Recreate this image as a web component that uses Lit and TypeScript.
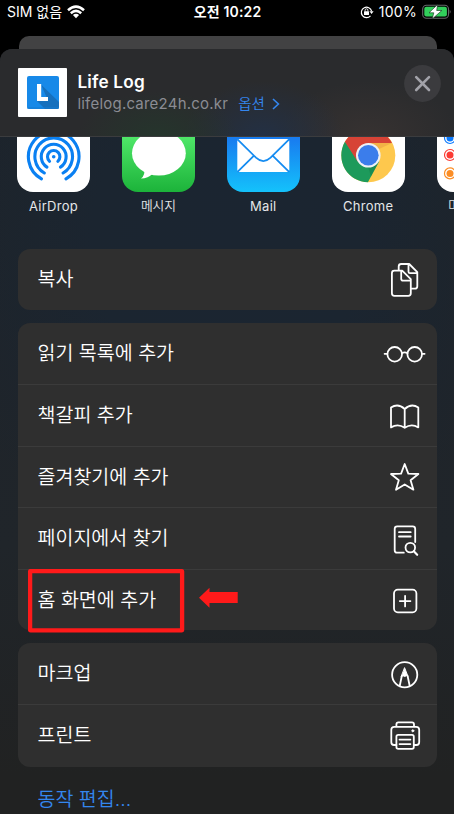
import { LitElement, html, svg, css } from "lit";
import { customElement, property } from "lit/decorators.js";

const arc = (r: number, deg: number) => {
  const a = (deg * Math.PI) / 180;
  const x = r * Math.sin(a);
  const y = r * Math.cos(a);
  return `M${-x} ${y}A${r} ${r} 0 1 1 ${x} ${y}`;
};

const actionIcons: Record<string, unknown> = {
  copy: svg`<path d="M15.7 10V6.5Q15.7 4 18.2 4H26.2L34.3 12.2V26.2Q34.3 28.7 31.8 28.7H28.5M25.5 4.5V11.7Q25.5 13.2 27 13.2H34"/>
    <path d="M11.3 10.7H19.2L27.8 19.2V33.3Q27.8 35.8 25.3 35.8H11.4Q8.9 35.8 8.9 33.3V13.2Q8.9 10.7 11.3 10.7ZM18.2 11V18.8Q18.2 20.7 20 20.7H27.6"/>`,
  glasses: svg`<circle cx="11.7" cy="20.3" r="7.3"/><circle cx="31.7" cy="20.3" r="7.3"/><path d="M1.6 19.8H4.3M39 19.8H41.6M18.9 19.1Q21.7 17.7 24.5 19.1"/>`,
  book: svg`<path d="M21.7 13Q15 6.8 8 11.6V31.4Q15 27.3 21.7 31.8Q28.5 27.3 35.3 31.4V11.6Q28.5 6.8 21.7 13V31.8"/>`,
  star: svg`<path d="M21.7 7L25.3 16.6L35.4 17L27.6 23.3L30.4 32.7L21.7 27.4L13 32.7L15.8 23.3L8 17L18.1 16.6Z"/>`,
  find: svg`<path d="M20.8 33.7H14.2Q11.7 33.7 11.7 31.2V9.8Q11.7 7.3 14.2 7.3H29.7Q32.2 7.3 32.2 9.8V23M16 13.2H27.7M16 17.5H27.7"/><circle cx="27.3" cy="28.6" r="4.8"/><path d="M30.8 32.2L34.2 35.8" stroke-width="2.1"/>`,
  plus: svg`<rect x="11" y="9.7" width="22.4" height="22.6" rx="3.8"/><path d="M22.1 15.8V26.4M16.8 21.1H27.4"/>`,
  markup: svg`<circle cx="21.7" cy="20.7" r="12.6"/><path d="M16.8 31.5L18.8 22M26.6 31.5L24.6 22"/><path d="M21.7 14L25 22.5L23.4 21.7L21.7 22.5L20 21.7L18.4 22.5Z" fill="#fff" stroke-width="1"/>`,
  print: svg`<path d="M13.4 11.5V9.4Q13.4 7.4 15.4 7.4H29Q31 7.4 31 9.4V11.5M13.4 30H11Q8.3 30 8.3 27.3V14.8Q8.3 11.8 11.3 11.8H33.2Q36.2 11.8 36.2 14.8V27.3Q36.2 30 33.5 30H30.8"/><rect x="13.4" y="19.9" width="17.4" height="14" rx="1.8"/><path d="M16.5 24.6H27.4M16.5 29.1H27.4"/><circle cx="29.8" cy="15.8" r="1" fill="#fff" stroke-width="1"/>`,
};

const appIcons: Record<string, unknown> = {
  airdrop: svg`<rect width="73" height="73" rx="16" fill="#fff"/>
    <g transform="translate(36.7 37.7)" fill="none" stroke="#0a80f2" stroke-width="3.1" stroke-linecap="round">
      <path d=${arc(25.3, 29)}/><path d=${arc(18.8, 30)}/><path d=${arc(12.4, 33)}/><path d=${arc(6.2, 42)}/>
      <circle r="1.8" fill="#0a80f2" stroke="none"/></g>`,
  messages: svg`<defs><linearGradient id="m" x2="0" y2="1"><stop stop-color="#5ff777"/><stop offset="1" stop-color="#1cb33a"/></linearGradient></defs>
    <rect width="73" height="73" rx="16" fill="url(#m)"/>
    <ellipse cx="36.9" cy="34.2" rx="26.9" ry="22.4" fill="#fff"/><path d="M22 50Q23.5 56 19 59.6Q26 59.3 31 54.5Z" fill="#fff"/>`,
  mail: svg`<defs><linearGradient id="l" x2="0" y2="1"><stop stop-color="#1a6df0"/><stop offset=".3" stop-color="#187ff0"/><stop offset="1" stop-color="#14c2fb"/></linearGradient></defs>
    <rect width="73" height="73" rx="16" fill="url(#l)"/>
    <rect x="10.3" y="20" width="52" height="33" rx="2" fill="#fff"/>
    <path d="M10.5 20.3L29 38.7Q36.3 45.5 43.6 38.7L62.1 20.3M10.5 52.8L27 36.6M62.1 52.8L45.6 36.6" fill="none" stroke="#168cf1" stroke-width="1.8"/>`,
  chrome: svg`<rect width="73" height="73" rx="16" fill="#fff"/>
    <circle cx="36.3" cy="36.3" r="27" fill="#fec84d"/>
    <path d="M36.3 36.3L12.9 22.8A27 27 0 0 0 35.9 63.3L47.1 42.5Z" fill="#1d9a5b"/>
    <path d="M12.9 22.8A27 27 0 0 1 60 23.9H36.3L25.5 42.5Z" fill="#d74336"/>
    <path d="M47 30L60 23.9H36Z" fill="#e9a443" opacity=".6"/>
    <path d="M36.3 48.5L47.1 42.5L39 57.5Z" fill="#167c49" opacity=".45"/>
    <circle cx="36.3" cy="36.3" r="12.3" fill="#eef0f4"/><circle cx="36.3" cy="36.3" r="10.3" fill="#3b7deb"/>`,
  reminders: svg`<rect width="73" height="73" rx="16" fill="#fff"/>
    ${[["#0a7aff", 19], ["#fb3b34", 36], ["#fb8d25", 54.4]].map(
      ([c, y]) => svg`<circle cx="13" cy=${y} r="5.5" fill="none" stroke=${c} stroke-width="1.2"/><circle cx="13" cy=${y} r="3.5" fill=${c}/>`
    )}`,
};

@customElement("share-app")
class ShareApp extends LitElement {
  @property() icon = "";
  @property() label = "";
  static styles = css`
    :host { display: flex; flex-direction: column; align-items: center; flex: 0 0 73px; }
    svg { display: block; flex: none; }
    .label { margin-top: 6px; font-size: 13px; line-height: 16px; letter-spacing: 0.3px; white-space: nowrap; color: #e4e6e8; }
    .label:lang(ko) { font-size: 12.8px; font-weight: 350; letter-spacing: -0.1px; }
  `;
  render() {
    const lang = /[가-힣]/.test(this.label) ? "ko" : "en";
    return html`<svg width="73" height="73" viewBox="0 0 73 73">${appIcons[this.icon]}</svg>
      <span class="label" lang=${lang}>${this.label}</span>`;
  }
}

@customElement("action-row")
class ActionRow extends LitElement {
  @property() icon = "";
  @property() label = "";
  static styles = css`
    :host { display: flex; align-items: center; justify-content: space-between; box-sizing: border-box; height: 61.45px; padding: 0 10px 0 19.5px; }
    .label { margin-top: -1px; font-size: 19.5px; line-height: 28px; font-weight: 350; color: #fff; white-space: nowrap; }
    svg { display: block; fill: none; stroke: #fff; stroke-width: 1.8; stroke-linejoin: round; stroke-linecap: round; }
  `;
  render() {
    return html`<span class="label">${this.label}</span>
      <svg width="44" height="40" viewBox="0 0 44 40">${actionIcons[this.icon]}</svg>`;
  }
}

const groups = [
  [["복사", "copy"]],
  [
    ["읽기 목록에 추가", "glasses"],
    ["책갈피 추가", "book"],
    ["즐겨찾기에 추가", "star"],
    ["페이지에서 찾기", "find"],
    ["홈 화면에 추가", "plus"],
  ],
  [["마크업", "markup"], ["프린트", "print"]],
];

const apps = [
  ["AirDrop", "airdrop"],
  ["메시지", "messages"],
  ["Mail", "mail"],
  ["Chrome", "chrome"],
  ["미리 알림", "reminders"],
];

@customElement("app-root")
class AppRoot extends LitElement {
  static styles = css`
    :host { display: flex; flex-direction: column; position: relative; width: 454px; height: 814px; overflow: hidden; background: #000; color: #fff; font-family: Inter, "Noto Sans CJK KR", sans-serif; }
    .status { display: grid; grid-template-columns: 1fr auto 1fr; align-items: center; height: 24px; flex: none; padding: 0 1px 0 7px; font-size: 14px; line-height: 20px; }
    .left, .right { display: flex; align-items: center; }
    .left { gap: 5px; }
    .right { justify-content: flex-end; gap: 5px; letter-spacing: 0.3px; }
    .time { font-weight: 600; font-size: 14px; margin-right: 5px; letter-spacing: 0.15px; }
    .status svg { display: block; }
    .behind { flex: none; height: 13px; margin: 12px 17px 0 19px; border-radius: 10px 10px 0 0; background: #424243; }
    .sheet { flex: 1; min-height: 0; display: flex; flex-direction: column; border-radius: 12px 12px 0 0; overflow: hidden;
      background: radial-gradient(ellipse 300px 330px at 50% 25%, #1b2531 0, #1b2530 45%, transparent 100%), linear-gradient(#1d232a, #20252a 65%, #212222 95%); }
    .header { box-sizing: border-box; flex: none; height: 88px; display: flex; align-items: flex-start; padding: 19px 13px 0 18px; border-bottom: 1px solid #3b3c3e;
      background: radial-gradient(ellipse 80px 45px at 158px 100%, #25352c, transparent), radial-gradient(ellipse 80px 55px at 263px 100%, #233044, transparent), radial-gradient(ellipse 90px 55px at 368px 100%, #373231, transparent), #2a2b2d; }
    .logo { display: block; flex: none; }
    .info { flex: 1; margin-left: 10.4px; padding-top: 2px; }
    .title { font-size: 17.2px; line-height: 23px; font-weight: 600; letter-spacing: 0.2px; }
    .sub { display: flex; align-items: center; font-size: 15px; line-height: 22px; letter-spacing: 0.22px; color: #8b8c93; }
    .option { margin-left: 10px; color: #3486ee; font-size: 14.5px; font-weight: 350; letter-spacing: 0; }
    .chev { margin-left: 7px; }
    .close { display: block; margin-top: -3px; }
    .apps { flex: none; height: 112px; display: flex; gap: 31.9px; padding-left: 17px; overflow: hidden; }
    .apps share-app { margin-top: -18px; }
    .cards { display: flex; flex-direction: column; gap: 12.6px; padding: 0 17px 0 18px; }
    .card { border-radius: 12px; background: #2f2f2f; flex: none; }
    .card:last-child { padding-bottom: 1px; }
    .card action-row + action-row { border-top: 1px solid #3b3b3b; }
    .edit { margin: 18px 0 0 37.5px; font-size: 19.5px; line-height: 28px; font-weight: 350; color: #3486ee; }
    .mark { position: absolute; left: 28px; top: 569px; }
  `;
  render() {
    return html`
      <div class="status">
        <div class="left"><span>SIM 없음</span>
          <svg width="18" height="14" viewBox="0 0 18 14" fill="none" stroke="#fff" stroke-width="2.5"><path d="M1 5.2Q9-2 17 5.2M3.8 8.2Q9 3.6 14.2 8.2"/><path d="M9 13.2L5.9 10.1Q9 7.5 12.1 10.1Z" fill="#fff" stroke="none"/></svg>
        </div>
        <span class="time">오전 10:22</span>
        <div class="right">
          <svg width="14" height="14" viewBox="0 0 14 14" fill="none" stroke="#fff" stroke-width="1.2"><path d="M10.5 10.8A5.2 5.2 0 1 1 11.6 6.2"/><path d="M9.4 6.2H13.6L11.6 8.9Z" fill="#fff" stroke="none"/><rect x="4" y="6.3" width="5" height="3.7" rx=".5" fill="#fff" stroke="none"/><path d="M5.1 6.5V5.2a1.4 1.4 0 0 1 2.8 0V6.5" stroke-width=".9"/></svg>
          <span>100%</span>
          <svg width="31" height="16" viewBox="0 0 31 16"><rect x=".7" y="1.2" width="25.8" height="13" rx="3.8" fill="none" stroke="#66686a" stroke-width="1.1"/><rect x="2.3" y="2.8" width="22.6" height="9.8" rx="2" fill="#32cf5b"/><path d="M27.7 5.7Q29.6 7.7 27.7 9.7Z" fill="#66686a"/><path d="M15.6 .5L7 8.8H11.8L10.2 15L19.8 6.5H14.7Z" fill="#fff" stroke="#0b2a12" stroke-width=".6"/></svg>
        </div>
      </div>
      <div class="behind"></div>
      <div class="sheet">
        <div class="header">
          <svg class="logo" width="49" height="49" viewBox="0 0 49 49"><rect width="49" height="49" rx="1" fill="#fff"/><rect x="9" y="8" width="32" height="33" rx="2" fill="#1789e8"/><path d="M23 16.5L41 34V39Q41 41 39 41H27L19 33L30 32.5Z" fill="#1670bd"/><path d="M9.3 40H40.7" stroke="#147bd0"/><path d="M19 16H23.2V29H30V33H19Z" fill="#fff"/></svg>
          <div class="info">
            <div class="title">Life Log</div>
            <div class="sub"><span>lifelog.care24h.co.kr</span><span class="option">옵션</span>
              <svg class="chev" width="8" height="12" viewBox="0 0 8 12" fill="none" stroke="#3486ee" stroke-width="1.6"><path d="M1 1L6.4 6L1 11"/></svg></div>
          </div>
          <svg class="close" width="37" height="37" viewBox="0 0 37 37"><circle cx="18.5" cy="18.5" r="18.4" fill="#3b3b3e"/><path d="M12.2 12.2L25 25M25 12.2L12.2 25" stroke="#a2a2a9" stroke-width="2.6" stroke-linecap="round"/></svg>
        </div>
        <div class="apps">${apps.map(([l, i]) => html`<share-app .label=${l} .icon=${i}></share-app>`)}</div>
        <div class="cards">${groups.map(
          (g) => html`<div class="card">${g.map(([l, i]) => html`<action-row .label=${l} .icon=${i}></action-row>`)}</div>`
        )}</div>
        <div class="edit">동작 편집...</div>
      </div>
      <svg class="mark" width="212" height="64" viewBox="0 0 212 64"><rect x="2.1" y="2.1" width="152" height="59.2" rx=".5" fill="none" stroke="#ff1a1a" stroke-width="4.3"/><path d="M171 28.8L181.5 18.8V23H209.7V34H181.5V38.8Z" fill="#ff1a1a"/></svg>
    `;
  }
}
